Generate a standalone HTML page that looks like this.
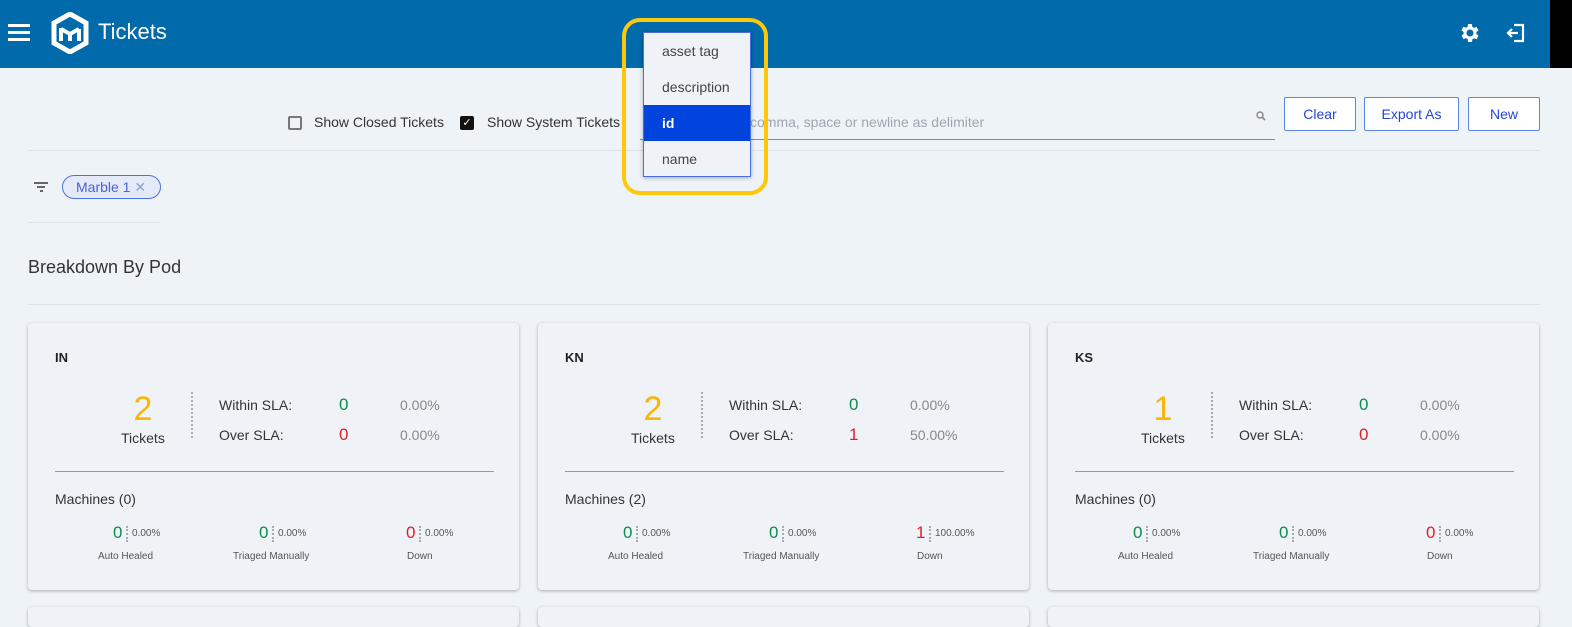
<!DOCTYPE html>
<html><head><meta charset="utf-8"><style>
*{margin:0;padding:0;box-sizing:border-box}
body{width:1572px;height:616px;overflow:hidden;background:#eef3f8;font-family:"Liberation Sans",sans-serif;color:#333;position:relative}
.a{position:absolute;white-space:nowrap}
.btn{position:absolute;top:97px;height:34px;border:1px solid #5c86e8;background:#fff;color:#2446d8;font-size:14px;display:flex;align-items:center;justify-content:center;border-radius:2px}
.card{position:absolute;top:323px;width:491px;height:267px;background:#eff3f8;border-radius:4px;box-shadow:0 1px 3px rgba(0,0,0,.3)}
.card2{position:absolute;top:607px;width:491px;height:20px;background:#eff3f8;border-radius:4px;box-shadow:0 1px 3px rgba(0,0,0,.3)}
.t{font-size:13px;font-weight:bold;color:#222}
.big{font-size:34px;color:#fbb40a;width:60px;text-align:center}
.lab{font-size:14px;color:#333}
.sm{font-size:10px;color:#555}
.mn{font-size:17px}
.g{color:#118a4e}.r{color:#e0202a}.p{color:#888}
.dv{border-left:2px dotted #aaa}
</style></head><body>
<div class="a" style="left:0;top:0;width:1550px;height:68px;background:#006aab"></div>
<div class="a" style="left:1550px;top:0;width:22px;height:68px;background:#000"></div>
<div class="a" style="left:8px;top:24px;width:22px;height:3px;background:#fff"></div>
<div class="a" style="left:8px;top:31px;width:22px;height:3px;background:#fff"></div>
<div class="a" style="left:8px;top:38px;width:22px;height:3px;background:#fff"></div>
<svg class="a" style="left:51px;top:12px" width="38" height="42" viewBox="0 0 38 42"><polygon points="19,2 35,11 35,31 19,40 3,31 3,11" fill="none" stroke="#fff" stroke-width="5"/><path d="M10,16 L10,29 M10,17 L19,22 L28,17 M28,17 L28,29 M19,22 L19,29" stroke="#fff" stroke-width="4" fill="none"/></svg>
<div class="a" style="left:98px;top:19px;font-size:22px;color:#fff">Tickets</div>
<svg class="a" style="left:1458px;top:21px" width="24" height="24" viewBox="0 0 24 24"><path fill="#fff" d="M19.4 13a7.5 7.5 0 000-2l2.1-1.6-2-3.5-2.5 1a7 7 0 00-1.7-1L15 3h-4l-.4 2.7a7 7 0 00-1.7 1l-2.5-1-2 3.5L6.6 11a7.5 7.5 0 000 2l-2.1 1.6 2 3.5 2.5-1a7 7 0 001.7 1L11 21h4l.4-2.7a7 7 0 001.7-1l2.5 1 2-3.5zM13 15.5a3.5 3.5 0 110-7 3.5 3.5 0 010 7z" transform="translate(-1 0)"/></svg>
<svg class="a" style="left:1505px;top:22px" width="22" height="22" viewBox="0 0 22 22"><path d="M9 3h9v16H9M3 11h10M7 7l-4 4 4 4" stroke="#fff" stroke-width="2.2" fill="none"/></svg>

<div class="a" style="left:288px;top:116px;width:14px;height:14px;border:2px solid #777;border-radius:2px"></div>
<div class="a lab" style="left:314px;top:114px">Show Closed Tickets</div>
<div class="a" style="left:460px;top:116px;width:14px;height:14px;background:#111;border-radius:2px;color:#fff;font-size:11px;line-height:14px;text-align:center">✓</div>
<div class="a lab" style="left:487px;top:114px">Show System Tickets</div>
<div class="a" style="left:750px;top:114px;font-size:14px;color:#a0a6b0">comma, space or newline as delimiter</div>
<svg class="a" style="left:1256px;top:111px" width="10" height="10" viewBox="0 0 10 10"><circle cx="4" cy="4" r="3" stroke="#888" stroke-width="1.4" fill="none"/><path d="M6 6l3 3" stroke="#888" stroke-width="1.6"/></svg>
<div class="a" style="left:640px;top:139px;width:635px;height:1px;background:#888"></div>
<div class="btn" style="left:1284px;width:72px">Clear</div>
<div class="btn" style="left:1364px;width:95px">Export As</div>
<div class="btn" style="left:1468px;width:72px">New</div>
<div class="a" style="left:28px;top:150px;width:1512px;height:1px;background:#dde2e8"></div>

<div class="a" style="left:34px;top:182px;width:14px;height:2px;background:#666"></div>
<div class="a" style="left:37px;top:186px;width:8px;height:2px;background:#666"></div>
<div class="a" style="left:40px;top:190px;width:3px;height:2px;background:#666"></div>
<div class="a" style="left:62px;top:175px;width:99px;height:24px;border:1px solid #4a72e0;border-radius:12px;background:#e4eaf8;color:#4a62d8;font-size:14px;padding:3px 0 0 13px">Marble 1 <span style="color:#8aa0e0">✕</span></div>
<div class="a" style="left:28px;top:222px;width:132px;height:1px;background:#dde2e8"></div>

<div class="a" style="left:28px;top:257px;font-size:18px;color:#333">Breakdown By Pod</div>
<div class="a" style="left:28px;top:304px;width:1512px;height:1px;background:#dde2e8"></div>

<div class="card" style="left:28px">
<div class="a t" style="left:27px;top:27px">IN</div>
<div class="a big" style="left:85px;top:67px">2</div>
<div class="a lab" style="left:93px;top:107px">Tickets</div>
<div class="a dv" style="left:163px;top:69px;height:46px"></div>
<div class="a lab" style="left:191px;top:74px">Within SLA:</div><div class="a mn g" style="left:311px;top:72px">0</div><div class="a lab p" style="left:372px;top:74px">0.00%</div>
<div class="a lab" style="left:191px;top:104px">Over SLA:</div><div class="a mn r" style="left:311px;top:102px">0</div><div class="a lab p" style="left:372px;top:104px">0.00%</div>
<div class="a" style="left:27px;top:148px;width:439px;height:1px;background:#999"></div>
<div class="a lab" style="left:27px;top:168px">Machines (0)</div>
<div class="a mn g" style="left:85px;top:200px">0</div><div class="a dv" style="left:98px;top:203px;height:16px"></div><div class="a sm" style="left:104px;top:205px">0.00%</div><div class="a sm" style="left:70px;top:228px">Auto Healed</div>
<div class="a mn g" style="left:231px;top:200px">0</div><div class="a dv" style="left:244px;top:203px;height:16px"></div><div class="a sm" style="left:250px;top:205px">0.00%</div><div class="a sm" style="left:205px;top:228px">Triaged Manually</div>
<div class="a mn r" style="left:378px;top:200px">0</div><div class="a dv" style="left:391px;top:203px;height:16px"></div><div class="a sm" style="left:397px;top:205px">0.00%</div><div class="a sm" style="left:379px;top:228px">Down</div>
</div>
<div class="card" style="left:538px">
<div class="a t" style="left:27px;top:27px">KN</div>
<div class="a big" style="left:85px;top:67px">2</div>
<div class="a lab" style="left:93px;top:107px">Tickets</div>
<div class="a dv" style="left:163px;top:69px;height:46px"></div>
<div class="a lab" style="left:191px;top:74px">Within SLA:</div><div class="a mn g" style="left:311px;top:72px">0</div><div class="a lab p" style="left:372px;top:74px">0.00%</div>
<div class="a lab" style="left:191px;top:104px">Over SLA:</div><div class="a mn r" style="left:311px;top:102px">1</div><div class="a lab p" style="left:372px;top:104px">50.00%</div>
<div class="a" style="left:27px;top:148px;width:439px;height:1px;background:#999"></div>
<div class="a lab" style="left:27px;top:168px">Machines (2)</div>
<div class="a mn g" style="left:85px;top:200px">0</div><div class="a dv" style="left:98px;top:203px;height:16px"></div><div class="a sm" style="left:104px;top:205px">0.00%</div><div class="a sm" style="left:70px;top:228px">Auto Healed</div>
<div class="a mn g" style="left:231px;top:200px">0</div><div class="a dv" style="left:244px;top:203px;height:16px"></div><div class="a sm" style="left:250px;top:205px">0.00%</div><div class="a sm" style="left:205px;top:228px">Triaged Manually</div>
<div class="a mn r" style="left:378px;top:200px">1</div><div class="a dv" style="left:391px;top:203px;height:16px"></div><div class="a sm" style="left:397px;top:205px">100.00%</div><div class="a sm" style="left:379px;top:228px">Down</div>
</div>
<div class="card" style="left:1048px">
<div class="a t" style="left:27px;top:27px">KS</div>
<div class="a big" style="left:85px;top:67px">1</div>
<div class="a lab" style="left:93px;top:107px">Tickets</div>
<div class="a dv" style="left:163px;top:69px;height:46px"></div>
<div class="a lab" style="left:191px;top:74px">Within SLA:</div><div class="a mn g" style="left:311px;top:72px">0</div><div class="a lab p" style="left:372px;top:74px">0.00%</div>
<div class="a lab" style="left:191px;top:104px">Over SLA:</div><div class="a mn r" style="left:311px;top:102px">0</div><div class="a lab p" style="left:372px;top:104px">0.00%</div>
<div class="a" style="left:27px;top:148px;width:439px;height:1px;background:#999"></div>
<div class="a lab" style="left:27px;top:168px">Machines (0)</div>
<div class="a mn g" style="left:85px;top:200px">0</div><div class="a dv" style="left:98px;top:203px;height:16px"></div><div class="a sm" style="left:104px;top:205px">0.00%</div><div class="a sm" style="left:70px;top:228px">Auto Healed</div>
<div class="a mn g" style="left:231px;top:200px">0</div><div class="a dv" style="left:244px;top:203px;height:16px"></div><div class="a sm" style="left:250px;top:205px">0.00%</div><div class="a sm" style="left:205px;top:228px">Triaged Manually</div>
<div class="a mn r" style="left:378px;top:200px">0</div><div class="a dv" style="left:391px;top:203px;height:16px"></div><div class="a sm" style="left:397px;top:205px">0.00%</div><div class="a sm" style="left:379px;top:228px">Down</div>
</div>
<div class="card2" style="left:28px"></div><div class="card2" style="left:538px"></div><div class="card2" style="left:1048px"></div>

<div class="a" style="left:643px;top:32px;width:108px;height:145px;background:#eff3f8;border:1px solid #4a6ee0;box-shadow:0 1px 4px rgba(0,0,0,.3)">
<div class="a" style="left:18px;top:10px;font-size:14px;color:#444">asset tag</div>
<div class="a" style="left:18px;top:46px;font-size:14px;color:#444">description</div>
<div class="a" style="left:0;top:72px;width:106px;height:36px;background:#0044dd"></div>
<div class="a" style="left:18px;top:82px;font-size:14px;color:#fff;font-weight:bold">id</div>
<div class="a" style="left:18px;top:118px;font-size:14px;color:#444">name</div>
</div>
<div class="a" style="left:622px;top:18px;width:146px;height:177px;border:4px solid #fcc80a;border-radius:18px"></div>
</body></html>
